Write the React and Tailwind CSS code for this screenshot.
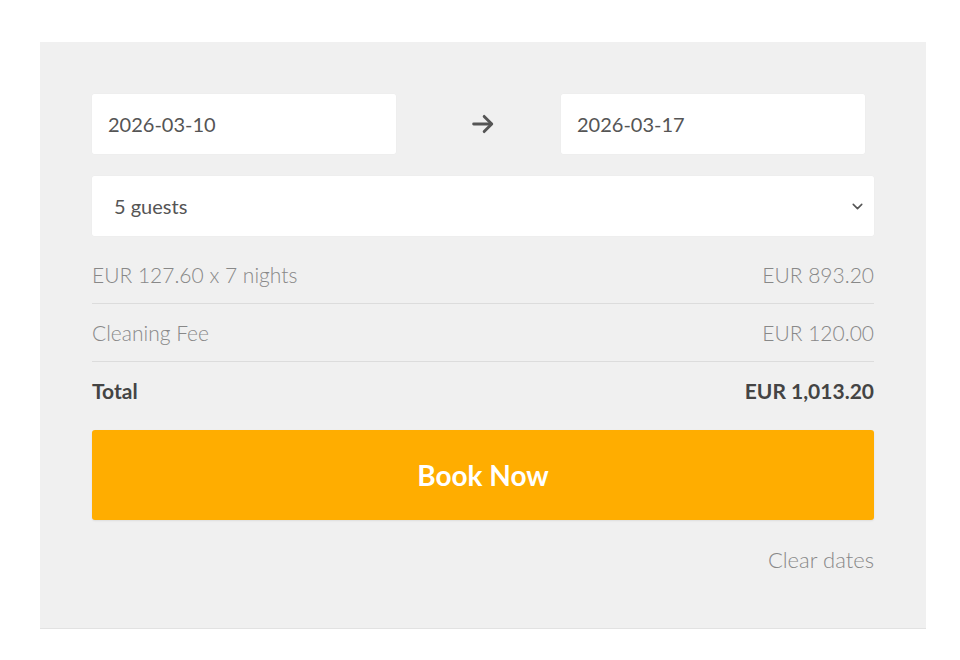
import React from "react";

const font = { fontFamily: "Lato, 'Noto Sans', sans-serif" };

function Row({ label, value, bold }) {
  return (
    <div
      className={
        "flex items-center justify-between h-[58px] " +
        (bold ? "font-bold text-[#444]" : "font-light text-[#888] border-b border-[#dcdcdc]")
      }
    >
      <span>{label}</span>
      <span>{value}</span>
    </div>
  );
}

export default function App() {
  return (
    <div className="w-[960px] h-[660px] bg-white pt-[42px] pl-[40px]" style={font}>
      <div className="w-[886px] h-[587px] bg-[#f0f0f0] border-b border-[#e2e2e2] px-[52px] pt-[52px]">
        <div className="flex items-center w-[773px]">
          <div className="w-[304px] h-[60px] bg-white rounded-[2px] flex items-center px-4 text-[20px] text-[#555] shadow-[0_0_1px_rgba(0,0,0,0.08)]">
            2026-03-10
          </div>
          <div className="flex-1 flex justify-center pl-[8px]">
            <svg width="28" height="28" viewBox="0 0 24 24" fill="none" stroke="#555" strokeWidth="2.5" strokeLinecap="round" strokeLinejoin="round">
              <path d="M4 12h15" />
              <path d="M13 5.5l6.5 6.5-6.5 6.5" />
            </svg>
          </div>
          <div className="w-[304px] h-[60px] bg-white rounded-[2px] flex items-center px-4 text-[20px] text-[#555] shadow-[0_0_1px_rgba(0,0,0,0.08)]">
            2026-03-17
          </div>
        </div>
        <div className="mt-[22px] h-[60px] bg-white rounded-[2px] flex items-center justify-between pl-[22px] pr-[8px] text-[20px] text-[#555] shadow-[0_0_1px_rgba(0,0,0,0.08)]">
          <span>5 guests</span>
          <svg width="17" height="17" viewBox="0 0 24 24" fill="none" stroke="#555" strokeWidth="2.2" strokeLinecap="round" strokeLinejoin="round">
            <path d="M6 9l6 6 6-6" />
          </svg>
        </div>
        <div className="mt-[10px] text-[21px]">
          <Row label="EUR 127.60 x 7 nights" value="EUR 893.20" />
          <Row label="Cleaning Fee" value="EUR 120.00" />
          <Row label="Total" value="EUR 1,013.20" bold />
        </div>
        <button className="mt-[10px] w-full h-[90px] bg-[#ffad00] rounded-[3px] text-white font-bold text-[28px] shadow-[0_1px_2px_rgba(0,0,0,0.08)]">
          Book Now
        </button>
        <div className="mt-[23px] text-right text-[22px] font-light text-[#888]">Clear dates</div>
      </div>
    </div>
  );
}
